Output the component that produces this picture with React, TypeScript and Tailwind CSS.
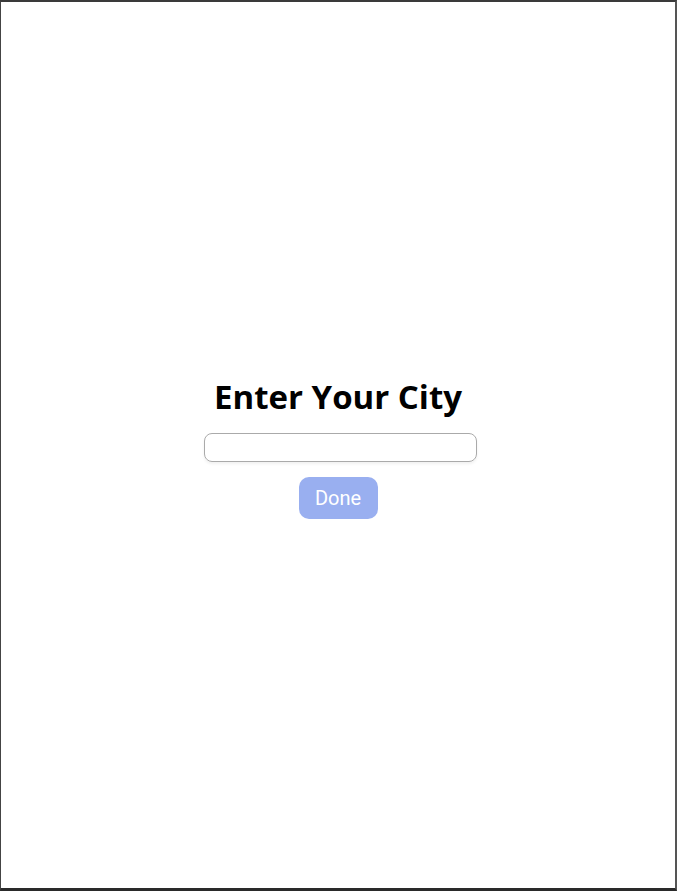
export default function App() {
  return (
    <div className="h-[891px] w-[677px] bg-white border-t-2 border-l border-r-2 border-b-[3px] border-t-[#3a3a3a] border-l-[#444] border-r-[#555] border-b-[#2a2a2a] flex flex-col items-center justify-center">
      <h1 className="text-[33px] leading-[40px] font-bold text-black mt-[6px]" style={{ fontFamily: '"Open Sans", "Noto Sans", sans-serif' }}>
        Enter Your City
      </h1>
      <input
        className="mt-[16px] ml-[4px] w-[273px] h-[29px] rounded-[8px] border border-[#aaaaaa] shadow-[0_2px_3px_rgba(0,0,0,0.06)] outline-none px-2"
        type="text"
      />
      <button
        className="mt-[15px] w-[79px] h-[42px] rounded-[10px] bg-[#99aff0] text-white text-[20px]"
        style={{ fontFamily: 'Roboto, "Liberation Sans", Arial, sans-serif' }}
      >
        Done
      </button>
    </div>
  );
}
